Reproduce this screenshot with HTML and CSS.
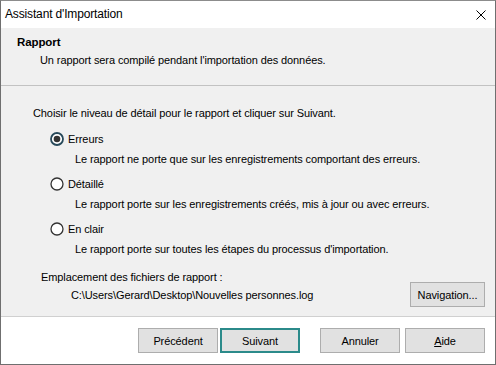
FILE: index.html
```html
<!DOCTYPE html>
<html lang="fr">

<head>
    <meta charset="UTF-8">
    <title>Assistant d'Importation</title>
    <link rel="stylesheet" href="styles.css">
</head>

<body>
    <div class="window">
        <div class="titlebar">
            <span class="title">Assistant d'Importation</span>
            <svg class="close" width="10" height="10" viewBox="0 0 10 10">
                <path d="M0.5 0.5 L9.5 9.5 M9.5 0.5 L0.5 9.5" stroke="#000" stroke-width="1" fill="none" />
            </svg>
        </div>

        <div class="header">
            <h1>Rapport</h1>
            <p>Un rapport sera compilé pendant l'importation des données.</p>
        </div>

        <div class="content">
            <p class="intro">Choisir le niveau de détail pour le rapport et cliquer sur Suivant.</p>

            <div class="options">
                <div class="option">
                    <label class="radio">
                        <svg width="14" height="14" viewBox="0 0 14 14">
                            <circle cx="7" cy="7" r="6" fill="#fff" stroke="#27495a" stroke-width="1.8" />
                            <circle cx="7" cy="7" r="3.3" fill="#333" />
                        </svg>
                        Erreurs
                    </label>
                    <p class="desc">Le rapport ne porte que sur les enregistrements comportant des erreurs.</p>
                </div>
                <div class="option">
                    <label class="radio">
                        <svg width="14" height="14" viewBox="0 0 14 14">
                            <circle cx="7" cy="7" r="6" fill="#fff" stroke="#333" stroke-width="1.3" />
                        </svg>
                        Détaillé
                    </label>
                    <p class="desc">Le rapport porte sur les enregistrements créés, mis à jour ou avec erreurs.</p>
                </div>
                <div class="option">
                    <label class="radio">
                        <svg width="14" height="14" viewBox="0 0 14 14">
                            <circle cx="7" cy="7" r="6" fill="#fff" stroke="#333" stroke-width="1.3" />
                        </svg>
                        En clair
                    </label>
                    <p class="desc">Le rapport porte sur toutes les étapes du processus d'importation.</p>
                </div>
            </div>

            <p class="location-label">Emplacement des fichiers de rapport :</p>
            <div class="location-row">
                <span class="path">C:\Users\Gerard\Desktop\Nouvelles personnes.log</span>
                <button class="btn btn-browse">Navigation...</button>
            </div>
        </div>

        <div class="footer">
            <button class="btn">Précédent</button>
            <button class="btn btn-default">Suivant</button>
            <button class="btn btn-cancel">Annuler</button>
            <button class="btn btn-help"><u>A</u>ide</button>
        </div>
    </div>
</body>

</html>
```

FILE: styles.css
```css
* {
    margin: 0;
    padding: 0;
    box-sizing: border-box;
    font-family: 'Liberation Sans', Arial, sans-serif;
}

body {
    background: #fff;
    font-size: 11px;
    letter-spacing: -0.1px;
    color: #000;
}

.window {
    width: 496px;
    height: 365px;
    border: 1px solid #6f6f6f;
    border-top-color: #8c8c8c;
    display: flex;
    flex-direction: column;
    background: #fff;
}

.titlebar {
    height: 27px;
    display: flex;
    justify-content: space-between;
    align-items: center;
    padding: 0 9px 1px 4px;
    background: #fff;
}

.title {
    font-size: 12px;
    letter-spacing: -0.15px;
}

.close {
    margin-top: 1px;
}

.header {
    height: 58px;
    background: #f0f0f0;
    border-bottom: 1px solid #c2c2c2;
    padding: 6px 0 0 16px;
}

.header h1 {
    font-size: 11.5px;
    font-weight: bold;
    line-height: 16px;
}

.header p {
    line-height: 16px;
    margin-top: 2px;
    padding-left: 23px;
}

.content {
    height: 231px;
    background: #f0f0f0;
    border-bottom: 1px solid #d0d0d0;
    padding: 19px 10px 0 32px;
    line-height: 16px;
}

.options {
    display: flex;
    flex-direction: column;
    gap: 9px;
    margin-top: 10px;
    padding-left: 17px;
}

.radio {
    display: flex;
    align-items: center;
    gap: 4px;
}

.desc {
    margin-top: 4px;
    padding-left: 25px;
}

.location-label {
    margin-top: 12px;
    padding-left: 8px;
}

.location-row {
    display: flex;
    justify-content: space-between;
    align-items: center;
    margin-top: -3px;
    padding-left: 38px;
}

.footer {
    flex: 1;
    display: flex;
    align-items: flex-start;
    padding: 11px 0 0 137px;
    background: #fff;
}

.btn {
    width: 80px;
    height: 25px;
    background: #e1e1e1;
    border: 1px solid #adadad;
    font-size: 11px;
    letter-spacing: -0.1px;
    color: #000;
}

.btn-default {
    margin-left: 2px;
    border: 2px solid #2b8a8a;
}

.btn-cancel {
    margin-left: 20px;
}

.btn-help {
    margin-left: 5px;
}

.btn-browse {
    width: 75px;
}
```
